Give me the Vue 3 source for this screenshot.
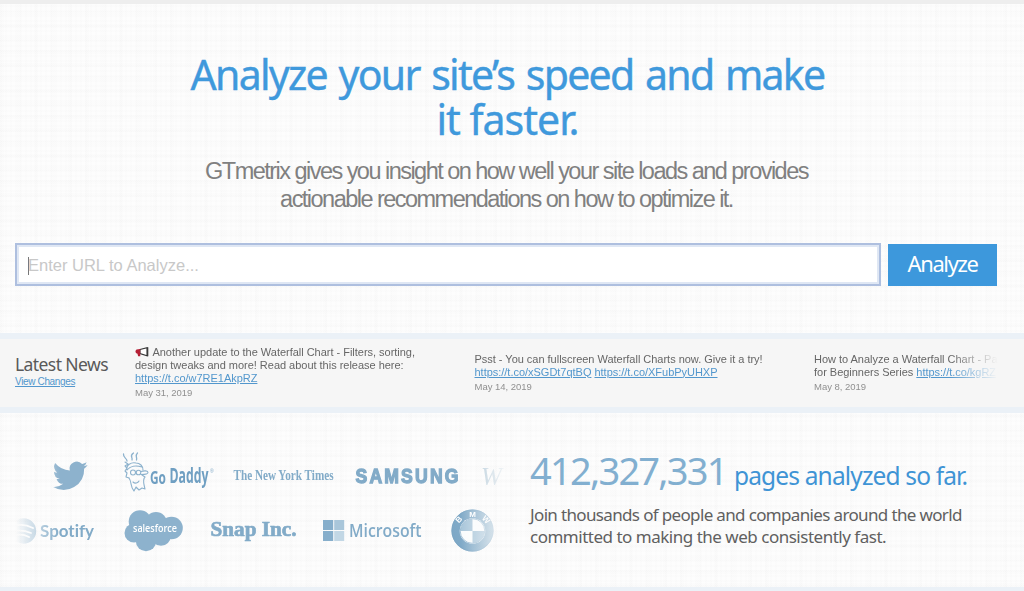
<script setup>
const news = [
  {
    icon: true,
    lines: ['Another update to the Waterfall Chart - Filters, sorting,', 'design tweaks and more! Read about this release here:'],
    links: ['https://t.co/w7RE1AkpRZ'],
    date: 'May 31, 2019',
  },
  {
    lines: ['Psst - You can fullscreen Waterfall Charts now. Give it a try!'],
    links: ['https://t.co/xSGDt7qtBQ', 'https://t.co/XFubPyUHXP'],
    date: 'May 14, 2019',
  },
  {
    lines: ['How to Analyze a Waterfall Chart - Pa'],
    lead: 'for Beginners Series',
    links: ['https://t.co/kgRZ'],
    date: 'May 8, 2019',
  },
]
</script>

<template>
  <div class="page">
    <section class="hero">
      <h1><span class="h-a">Analyze your site’s speed and make</span><br /><span class="h-b">it faster.</span></h1>
      <p class="lede"><span>GTmetrix gives you insight on how well your site loads and provides</span><br /><span>actionable recommendations on how to optimize it.</span></p>
      <div class="form">
        <div class="field"><i class="caret"></i><span>Enter URL to Analyze...</span></div>
        <button type="button"><span>Analyze</span></button>
      </div>
    </section>

    <section class="news">
      <div class="news-head">
        <h2>Latest News</h2>
        <a>View Changes</a>
      </div>
      <div class="feed">
        <article v-for="item in news" :key="item.date">
          <p>
            <template v-for="(line, i) in item.lines" :key="line">
              <svg v-if="item.icon && i === 0" class="horn" viewBox="0 0 14 10" width="14" height="10">
                <path d="M5 2.500 12 .8v8L5 6.600z" fill="#fff" stroke="#333" stroke-width="1.1" />
                <path d="M5.200 2 1.500 2.600.4 4l.5 2 1.600.8.6 2.400h2.200L5.200 6.800z" fill="#b51f35" />
                <path d="M12.700.3v9" stroke="#333" stroke-width="1.2" />
              </svg>
              {{ line }}<br />
            </template>
            <template v-if="item.lead">{{ item.lead }}&nbsp;</template>
            <template v-for="(link, i) in item.links" :key="link"><template v-if="i">&nbsp;</template><a>{{ link }}</a></template>
          </p>
          <time>{{ item.date }}</time>
        </article>
      </div>
    </section>

    <section class="stats">
      <div class="brands">
        <div class="row">
          <svg viewBox="16 448 94 52" width="94" height="52">
            <path fill="#8db2cd" transform="translate(53.200 458) scale(1.46)" d="M23.600 4.800a10 10 0 0 1-2.800.8 4.900 4.900 0 0 0 2.100-2.700 10 10 0 0 1-3.100 1.200 4.900 4.900 0 0 0-8.400 4.500A14 14 0 0 1 1.300 3.500a4.900 4.900 0 0 0 1.500 6.500 5 5 0 0 1-2.200-.6 4.900 4.900 0 0 0 3.900 4.900 5 5 0 0 1-2.200 0 4.900 4.900 0 0 0 4.600 3.400A10 10 0 0 1 0 19.800a14 14 0 0 0 21.200-12.500 10 10 0 0 0 2.400-2.500z" />
          </svg>
          <svg viewBox="110 448 114 52" width="114" height="52">
            <g fill="none" stroke="#8db2cd" stroke-width="1.1" stroke-linecap="round" stroke-linejoin="round">
              <path d="M127 461c0-3-4-3-3.500-7M132 460c1-3-3-4 1.500-7M136.500 460c1-3-2-4 1-7" stroke-width="1.300" />
              <path d="M127 470c-1-5 4-8 9-7 4 0 7 3 7 7M127 470c3-4 9-5 15-3M125 462l3 2-3 2 2 2-2 3 2 2-1 4 3 1" />
              <circle cx="133" cy="472.500" r="2.500" /><circle cx="138.500" cy="472.500" r="2.300" />
              <path d="M141 471.500c3-1 7-1 7 1 0 2-4 2-7 2M129 478c3 4 1 9 5 13l2-4 3 3 3-2 3 1c-1-5-3-9 0-12l-3-2M133 482c2 2 5 1 6-1" />
            </g>
            <text x="150" y="483.500" class="comic" textLength="16" lengthAdjust="spacingAndGlyphs" font-size="18">Go</text>
            <text x="169.500" y="483" class="comic" textLength="39" lengthAdjust="spacingAndGlyphs" font-size="21">Daddy</text>
            <text x="210" y="473" class="reg">®</text>
          </svg>
          <svg viewBox="224 448 120 52" width="120" height="52">
            <text x="233.500" y="480" class="times" textLength="100" lengthAdjust="spacingAndGlyphs">The New York Times</text>
          </svg>
          <svg viewBox="344 448 126 52" width="126" height="52">
            <text transform="translate(355.500 483) scale(.88 1)" class="samsung" textLength="117" lengthAdjust="spacing">SAMSUNG</text>
          </svg>
          <svg viewBox="470 448 40 52" width="40" height="52">
            <text x="481" y="485" class="wiki">W</text>
          </svg>
        </div>
        <div class="row">
          <svg viewBox="16 505 94 54" width="94" height="54">
            <circle cx="23.500" cy="531" r="12.700" fill="#8db2cd" />
            <path d="M14 526c6-2 13-1 19 2M15 531c6-1 11 0 16 2M16 535c5-1 9 0 13 2" fill="none" stroke="#fff" stroke-width="1.800" stroke-linecap="round" />
            <text x="40" y="537" class="spotify" textLength="54" lengthAdjust="spacingAndGlyphs">Spotify</text>
          </svg>
          <svg viewBox="110 505 90 54" width="90" height="54">
            <g fill="#8db2cd">
              <circle cx="140" cy="521.500" r="11.300" /><circle cx="156" cy="523" r="11" /><circle cx="171.500" cy="528" r="11.300" />
              <circle cx="134" cy="533" r="9.500" /><circle cx="146" cy="541" r="10.200" /><circle cx="161" cy="536" r="9.800" />
            </g>
            <text x="133" y="532" class="sales" textLength="44" lengthAdjust="spacingAndGlyphs">salesforce</text>
          </svg>
          <svg viewBox="200 505 110 54" width="110" height="54">
            <text x="210.500" y="536" class="snap" textLength="86" lengthAdjust="spacingAndGlyphs">Snap Inc.</text>
          </svg>
          <svg viewBox="310 505 126 54" width="126" height="54">
            <path fill="#86aecb" d="M323 520h10.200v10H323zM323 531h10.200v10H323z" />
            <path fill="#a9c6da" d="M334.200 520h10v10h-10z" /><path fill="#c2d7e5" d="M334.200 531h10v10h-10z" />
            <text x="349" y="537" class="micro" textLength="72.500" lengthAdjust="spacingAndGlyphs">Microsoft</text>
          </svg>
          <svg viewBox="436 505 74 54" width="74" height="54">
            <defs><linearGradient id="ring" x1="0" y1=".6" x2="1" y2=".4"><stop offset="0" stop-color="#7ca7c6" /><stop offset="1" stop-color="#8fb3cc" /></linearGradient></defs>
            <circle cx="472.500" cy="530.500" r="21" fill="url(#ring)" />
            <circle cx="472.500" cy="530.500" r="20.600" fill="none" stroke="#7ba5c3" stroke-width=".8" />
            <circle cx="472.500" cy="531" r="12.800" fill="#fafcfd" />
            <path d="M472.500 531v-12a12 12 0 0 0-12 12zM472.500 531v12a12 12 0 0 0 12-12z" fill="#a9c6da" />
            <circle cx="472.500" cy="531" r="12.300" fill="none" stroke="#8fb4ce" stroke-width=".8" />
            <g class="bmw" text-anchor="middle"><text transform="translate(460.800 521.500) rotate(-46)">B</text><text x="472.500" y="517">M</text><text transform="translate(484.200 521.500) rotate(46)">W</text></g>
          </svg>
        </div>
      </div>
      <div class="count">
        <div class="total"><strong>412,327,331</strong><span>pages analyzed so far.</span></div>
        <p><span class="c-a">Join thousands of people and companies around the world</span><br /><span class="c-b">committed to making the web consistently fast.</span></p>
      </div>
    </section>
  </div>
</template>

<style>
body { background: #fbfbfb; overflow: hidden; }
</style>

<style scoped>
* { box-sizing: border-box; }
.page {
  width: 1024px;
  height: 591px;
  overflow: hidden;
  display: flex;
  flex-direction: column;
  font-family: "Liberation Sans", Arial, sans-serif;
  border-bottom: 4px solid #ebf1f7;
  background-color: #fdfdfd;
  background-image:
    repeating-linear-gradient(90deg, rgba(60,60,60,.008) 0 2px, transparent 2px 5px),
    repeating-linear-gradient(0deg, rgba(60,60,60,.008) 0 2px, transparent 2px 5px),
    repeating-linear-gradient(90deg, rgba(60,60,60,.006) 0 4px, transparent 4px 17px),
    repeating-linear-gradient(0deg, rgba(60,60,60,.006) 0 4px, transparent 4px 13px);
}
h1, h2, p { margin: 0; font-weight: 400; }
span { white-space: nowrap; }
.hero { height: 333px; flex: none; border-top: 4px solid #eee; padding: 48px 27px 0 15px; }
h1 {
  text-align: center;
  font: 400 41px/45px "Noto Sans", sans-serif;
  color: #3f99dc;
  width: 985px;
  -webkit-text-stroke: .4px #3f99dc;
}
.h-a { letter-spacing: -1.7px; word-spacing: 2.5px; }
.h-b { letter-spacing: -1px; }
.lede { width: 983px; margin-top: 15px; text-align: center; font-size: 23.5px; line-height: 28px; color: #808080; letter-spacing: -1.53px; }
.form { display: flex; gap: 7px; margin-top: 30px; }
.field {
  width: 866px; height: 43px; display: flex; align-items: center;
  border: 2px solid #aebfdf; box-shadow: inset 0 0 0 2px #dfe7f4; background: #fff;
  padding: 2px 0 0 11px; font-size: 16.5px; color: #c8c8c8;
}
.caret { width: 1px; height: 18px; margin-right: -1px; background: #777; }
button {
  width: 109px; height: 42px; margin-top: 1px; padding: 0 0 4px; border: 0; background: #3d98dc; color: #fff;
  font: 400 22px/38px "Noto Sans", sans-serif; letter-spacing: -1.4px;
}
.news { height: 80px; flex: none; display: flex; background: #f6f6f6; border-top: 6px solid #ebf1f7; border-bottom: 6px solid #ebf1f7; }
.news-head { width: 135px; flex: none; padding: 14px 0 0 15px; font-size: 10px; line-height: 12px; }
h2 { font: 400 17.5px/22px "Noto Sans", sans-serif; color: #595959; letter-spacing: -.58px; white-space: nowrap; }
a { color: #5297cd; text-decoration: underline; }
.news-head a { display: block; margin-top: 1px; letter-spacing: -.35px; }
.feed {
  display: flex; align-items: center; width: 863px; overflow: hidden;
  -webkit-mask-image: linear-gradient(90deg, #000 0 815px, transparent 863px);
  mask-image: linear-gradient(90deg, #000 0 815px, transparent 863px);
}
article { width: 339.5px; flex: none; white-space: nowrap; color: #666; font-size: 11px; line-height: 13px; letter-spacing: -.02px; }
.horn { vertical-align: -1px; margin-right: 1px; }
time { display: block; font-size: 9.5px; line-height: 14px; color: #909090; margin-top: 1px; }
.stats { display: flex; }
.brands {
  width: 494px; margin-left: 16px; padding-top: 35px;
  -webkit-mask-image: linear-gradient(90deg, transparent, #000 44px 445px, transparent);
  mask-image: linear-gradient(90deg, transparent, #000 44px 445px, transparent);
}
.row { display: flex; height: 52px; margin-bottom: 5px; }
.row svg { flex: none; }
text { fill: #82abc8; }
.comic { font-family: "Open Sans", sans-serif; font-weight: 700; fill: #6f9fc2; }
.reg { font: 5px "Liberation Sans", sans-serif; }
.times { font: 700 14px "Liberation Serif", serif; }
.samsung { font: 700 20px "Liberation Sans", sans-serif; stroke: #82abc8; stroke-width: 1.3px; }
.wiki { font: italic 25px "Liberation Serif", serif; fill: #a5c0d2; }
.spotify { font: 700 17.5px Lato, sans-serif; font-variant-ligatures: none; }
.sales { font: 600 10.5px "Open Sans", sans-serif; fill: #fff; }
.snap { font: 700 22px "Liberation Serif", serif; stroke: #82abc8; stroke-width: .7px; }
.micro { font: 600 18px "Open Sans", sans-serif; }
.bmw text { fill: #fff; font: 700 8px "Liberation Sans", sans-serif; }
.count { margin-left: 20px; padding-top: 33px; font-family: "Noto Sans", sans-serif; color: #606060; }
.total { display: flex; align-items: baseline; gap: 8px; line-height: 48px; white-space: nowrap; }
.total strong { font-weight: 400; font-size: 38px; color: #82afd0; letter-spacing: -1.75px; width: 196px; }
.total span { font-size: 24.5px; color: #3f94d5; letter-spacing: -.85px; }
.count p { font-size: 17px; line-height: 22px; margin-top: 4px; }
.c-a { letter-spacing: -.65px; }
.c-b { letter-spacing: -.49px; }
</style>
